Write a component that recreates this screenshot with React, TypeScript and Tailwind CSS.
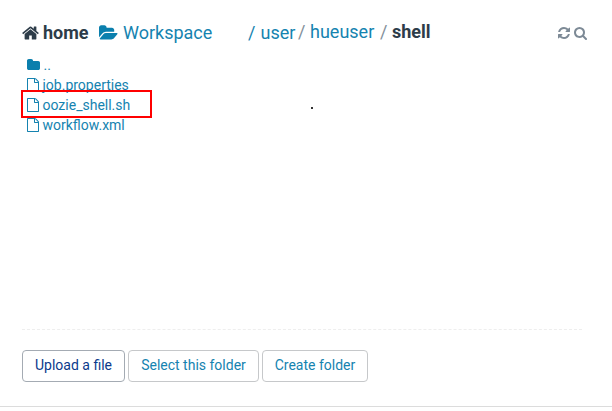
import type { ReactNode } from "react";

const icons = {
  home: {
    w: 1664,
    d: "M1408 992v480q0 26-19 45t-45 19h-384v-384h-256v384h-384q-26 0-45-19t-19-45v-480q0-1 .5-3t.5-3l575-474 575 474q1 2 1 6zm223-69l-62 74q-8 9-21 11h-3q-13 0-21-7l-692-577-692 577q-12 8-24 7-13-2-21-11l-62-74q-8-10-7-23.500t11-21.500l719-599q32-26 76-26t76 26l244 204v-195q0-14 9-23t23-9h192q14 0 23 9t9 23v408l219 182q10 8 11 21.500t-7 23.500z",
  },
  folder: {
    w: 1664,
    d: "M1664 608v704q0 92-66 158t-158 66h-1216q-92 0-158-66t-66-158v-960q0-92 66-158t158-66h320q92 0 158 66t66 158v32h672q92 0 158 66t66 158z",
  },
  folderOpen: {
    w: 1920,
    d: "M1879 952q0 31-31 66l-336 396q-43 51-120.500 86.500t-143.500 35.500h-1088q-34 0-60.500-13t-26.500-43q0-31 31-66l336-396q43-51 120.500-86.500t143.500-35.500h1088q34 0 60.500 13t26.500 43zm-343-344v160h-832q-94 0-197 47.500t-164 119.500l-337 396-5 6q0-4-.5-12.500t-.5-12.500v-960q0-92 66-158t158-66h320q92 0 158 66t66 158v32h544q92 0 158 66t66 158z",
  },
  file: {
    w: 1536,
    d: "M1468 380q28 28 48 76t20 88v1152q0 40-28 68t-68 28h-1344q-40 0-68-28t-28-68v-1600q0-40 28-68t68-28h896q40 0 88 20t76 48zm-444-244v376h376q-10-29-22-41l-313-313q-12-12-41-22zm384 1528v-1024h-416q-40 0-68-28t-28-68v-416h-768v1536h1280z",
  },
  refresh: {
    w: 1536,
    d: "M1511 1056q0 5-1 7-64 268-268 434.500t-478 166.500q-146 0-282.500-55t-243.500-157l-129 129q-19 19-45 19t-45-19-19-45v-448q0-26 19-45t45-19h448q26 0 45 19t19 45-19 45l-137 137q71 66 161 102t187 36q134 0 250-65t186-179q11-17 53-117 8-23 30-23h192q13 0 22.500 9.500t9.500 22.500zm25-800v448q0 26-19 45t-45 19h-448q-26 0-45-19t-19-45 19-45l138-138q-148-137-349-137-134 0-250 65t-186 179q-11 17-53 117-8 23-30 23h-199q-13 0-22.500-9.500t-9.500-22.500v-7q65-268 270-434.500t480-166.500q146 0 284 55.500t245 156.500l130-129q19-19 45-19t45 19 19 45z",
  },
  search: {
    w: 1664,
    d: "M1152 832q0-185-131.500-316.500t-316.500-131.500-316.500 131.500-131.500 316.500 131.500 316.500 316.500 131.500 316.500-131.500 131.500-316.500zm512 832q0 52-38 90t-90 38q-54 0-90-38l-343-342q-179 124-399 124-143 0-273.500-55.500t-225-150-150-225-55.500-273.500 55.500-273.500 150-225 225-150 273.500-55.500 273.500 55.500 225 150 150 225 55.500 273.500q0 220-124 399l343 343q37 37 37 90z",
  },
};

function Icon({ name, className }: { name: keyof typeof icons; className: string }) {
  return (
    <svg
      viewBox={`0 0 ${icons[name].w} 1792`}
      preserveAspectRatio="none"
      fill="currentColor"
      className={`shrink-0 ${className}`}
    >
      <path d={icons[name].d} />
    </svg>
  );
}

function FileRow({ name }: { name: string }) {
  return (
    <li className="flex h-5 items-center">
      <Icon name="file" className="mr-[3.5px] h-[14px] w-[12px]" />
      <a>{name}</a>
    </li>
  );
}

function Button({ children, className }: { children: ReactNode; className: string }) {
  return (
    <button className={`h-8 rounded-[4px] border bg-white pb-[2px] text-sm whitespace-nowrap ${className}`}>
      {children}
    </button>
  );
}

export default function App() {
  return (
    <div className="flex h-[411px] w-[612px] flex-col bg-white font-[Roboto,sans-serif] text-sm text-[#1583b0]">
      <main className="flex h-[407px] flex-col border-b border-[#dcdcdc] pr-[30px] pl-[22px]">
        <header className="flex h-[55px] items-start pt-[21px] text-[18px] leading-6 whitespace-nowrap">
          <a className="flex w-[77px] items-center font-bold text-[#2d3c49]">
            <Icon name="home" className="mr-[4px] h-[18px] w-[17px]" />
            home
          </a>
          <a className="flex w-[149px] items-center">
            <Icon name="folderOpen" className="mr-[5px] h-[18px] w-[19px] text-[#0b7fad]" />
            Workspace
          </a>
          <span className="w-[12.500px]">/</span>
          <a className="w-[37.500px]">user</a>
          <span className="-mt-px w-[12px] text-[#83909b]">/</span>
          <a className="-mt-px w-[70px]">hueuser</a>
          <span className="-mt-px w-[12px] text-[#83909b]">/</span>
          <b className="-mt-px text-[#2d3c49]">shell</b>
          <span className="mt-[5px] -mr-[5px] ml-auto flex gap-[4px] text-[#7d8a96]">
            <Icon name="refresh" className="h-[14px] w-[12px]" />
            <Icon name="search" className="h-[14px] w-[13px]" />
          </span>
        </header>
        <section className="relative h-[274px] pl-[5px] leading-5">
          <ul>
            <li className="flex h-5 items-center">
              <Icon name="folder" className="mr-[3.5px] h-[14px] w-[13px] text-[#0b7fad]" />
              <a>..</a>
            </li>
            <FileRow name="job.properties" />
            <FileRow name="oozie_shell.sh" />
            <FileRow name="workflow.xml" />
          </ul>
          <div className="absolute top-[35px] -left-px h-[28px] w-[131px] border-2 border-[#ff0000]" />
          <span className="absolute top-[52px] left-[289px] size-[2px] bg-[#333333]" />
        </section>
        <footer className="flex gap-[3px] border-t border-dashed border-[#eeeeee] pt-[20px]">
          <Button className="w-[103px] border-[#a4abb3] text-[#0b3a8c]">Upload a file</Button>
          <Button className="w-[131px] border-[#c6c8ca] text-[#1583b0]">Select this folder</Button>
          <Button className="w-[106px] border-[#c6c8ca] text-[#1583b0]">Create folder</Button>
        </footer>
      </main>
    </div>
  );
}
